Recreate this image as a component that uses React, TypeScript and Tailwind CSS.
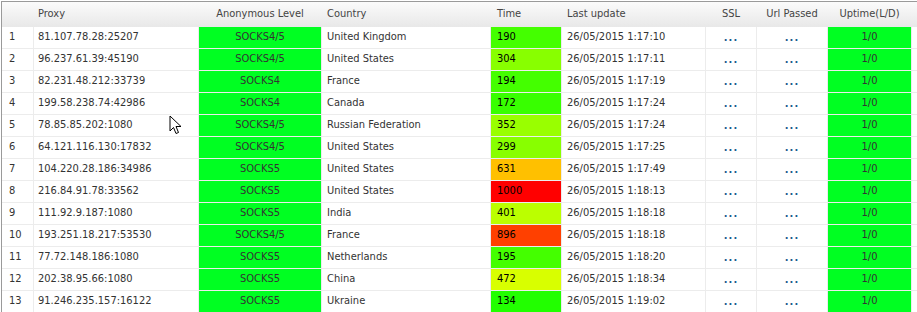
import React from "react";

type Row = {
  proxy: string;
  level: string;
  country: string;
  time: number;
  timeBg: string;
  upd: string;
};

const rows: Row[] = [
  { proxy: "81.107.78.28:25207", level: "SOCKS4/5", country: "United Kingdom", time: 190, timeBg: "bg-[#44ff00]", upd: "26/05/2015 1:17:10" },
  { proxy: "96.237.61.39:45190", level: "SOCKS4/5", country: "United States", time: 304, timeBg: "bg-[#88ff00]", upd: "26/05/2015 1:17:11" },
  { proxy: "82.231.48.212:33739", level: "SOCKS4", country: "France", time: 194, timeBg: "bg-[#44ff00]", upd: "26/05/2015 1:17:19" },
  { proxy: "199.58.238.74:42986", level: "SOCKS4", country: "Canada", time: 172, timeBg: "bg-[#38ff00]", upd: "26/05/2015 1:17:24" },
  { proxy: "78.85.85.202:1080", level: "SOCKS4/5", country: "Russian Federation", time: 352, timeBg: "bg-[#99ff00]", upd: "26/05/2015 1:17:24" },
  { proxy: "64.121.116.130:17832", level: "SOCKS4/5", country: "United States", time: 299, timeBg: "bg-[#88ff00]", upd: "26/05/2015 1:17:25" },
  { proxy: "104.220.28.186:34986", level: "SOCKS5", country: "United States", time: 631, timeBg: "bg-[#ffc000]", upd: "26/05/2015 1:17:49" },
  { proxy: "216.84.91.78:33562", level: "SOCKS5", country: "United States", time: 1000, timeBg: "bg-[#ff0000]", upd: "26/05/2015 1:18:13" },
  { proxy: "111.92.9.187:1080", level: "SOCKS5", country: "India", time: 401, timeBg: "bg-[#bbff00]", upd: "26/05/2015 1:18:18" },
  { proxy: "193.251.18.217:53530", level: "SOCKS4/5", country: "France", time: 896, timeBg: "bg-[#ff4000]", upd: "26/05/2015 1:18:18" },
  { proxy: "77.72.148.186:1080", level: "SOCKS5", country: "Netherlands", time: 195, timeBg: "bg-[#44ff00]", upd: "26/05/2015 1:18:20" },
  { proxy: "202.38.95.66:1080", level: "SOCKS5", country: "China", time: 472, timeBg: "bg-[#d8ff00]", upd: "26/05/2015 1:18:34" },
  { proxy: "91.246.235.157:16122", level: "SOCKS5", country: "Ukraine", time: 134, timeBg: "bg-[#22ff00]", upd: "26/05/2015 1:19:02" },
];

const cols = "grid-cols-[31px_164px_122px_168px_70px_143px_50px_70px_83px_1fr]";

function Dots() {
  return <span className="font-bold tracking-[1px] text-[#1d5b8c] leading-none">...</span>;
}

export default function App() {
  return (
    <div
      className="relative w-[917px] h-[312px] overflow-hidden bg-white pt-[1px] pl-[1px] text-[11px] text-[#333]"
      style={{ fontFamily: "'DejaVu Sans Condensed', 'DejaVu Sans', sans-serif", fontStretch: "condensed" }}
    >
      <div className="border-t border-l border-[#9a9a9a] h-full">
        <div className={`grid ${cols} gap-x-[1px] h-[25px] bg-gradient-to-b from-[#fbfbfb] to-[#e8e8e8] text-[#444]`}>
          <div />
          <div className="flex items-center pl-[4px]">Proxy</div>
          <div className="flex items-center justify-center">Anonymous Level</div>
          <div className="flex items-center pl-[5px]">Country</div>
          <div className="flex items-center pl-[6px]">Time</div>
          <div className="flex items-center pl-[5px]">Last update</div>
          <div className="flex items-center justify-center">SSL</div>
          <div className="flex items-center justify-center">Url Passed</div>
          <div className="flex items-center justify-center">Uptime(L/D)</div>
          <div />
        </div>
        <div className={`grid ${cols} gap-[1px] bg-[#ececec] auto-rows-[21px]`}>
          {rows.map((r, i) => (
            <React.Fragment key={i}>
              <div className="bg-white flex items-center pl-[7px]">{i + 1}</div>
              <div className="bg-white flex items-center pl-[4px]">{r.proxy}</div>
              <div className="bg-[#00ff22] flex items-center justify-center">{r.level}</div>
              <div className="bg-white flex items-center pl-[5px]">{r.country}</div>
              <div className={`${r.timeBg} flex items-center pl-[6px] text-black`}>{r.time}</div>
              <div className="bg-white flex items-center pl-[5px]">{r.upd}</div>
              <div className="bg-white flex items-center justify-center"><Dots /></div>
              <div className="bg-white flex items-center justify-center"><Dots /></div>
              <div className="bg-[#00ff22] flex items-center justify-center">1/0</div>
              <div className="bg-white" />
            </React.Fragment>
          ))}
        </div>
      </div>
      <svg className="absolute left-[169px] top-[115px]" width="14" height="21" viewBox="0 0 14 21">
        <path d="M1 1 L1 16 L4.5 12.5 L7 18.5 L9.5 17.5 L7 11.5 L12 11.5 Z" fill="white" stroke="black" strokeWidth="1" strokeLinejoin="miter" />
      </svg>
    </div>
  );
}
